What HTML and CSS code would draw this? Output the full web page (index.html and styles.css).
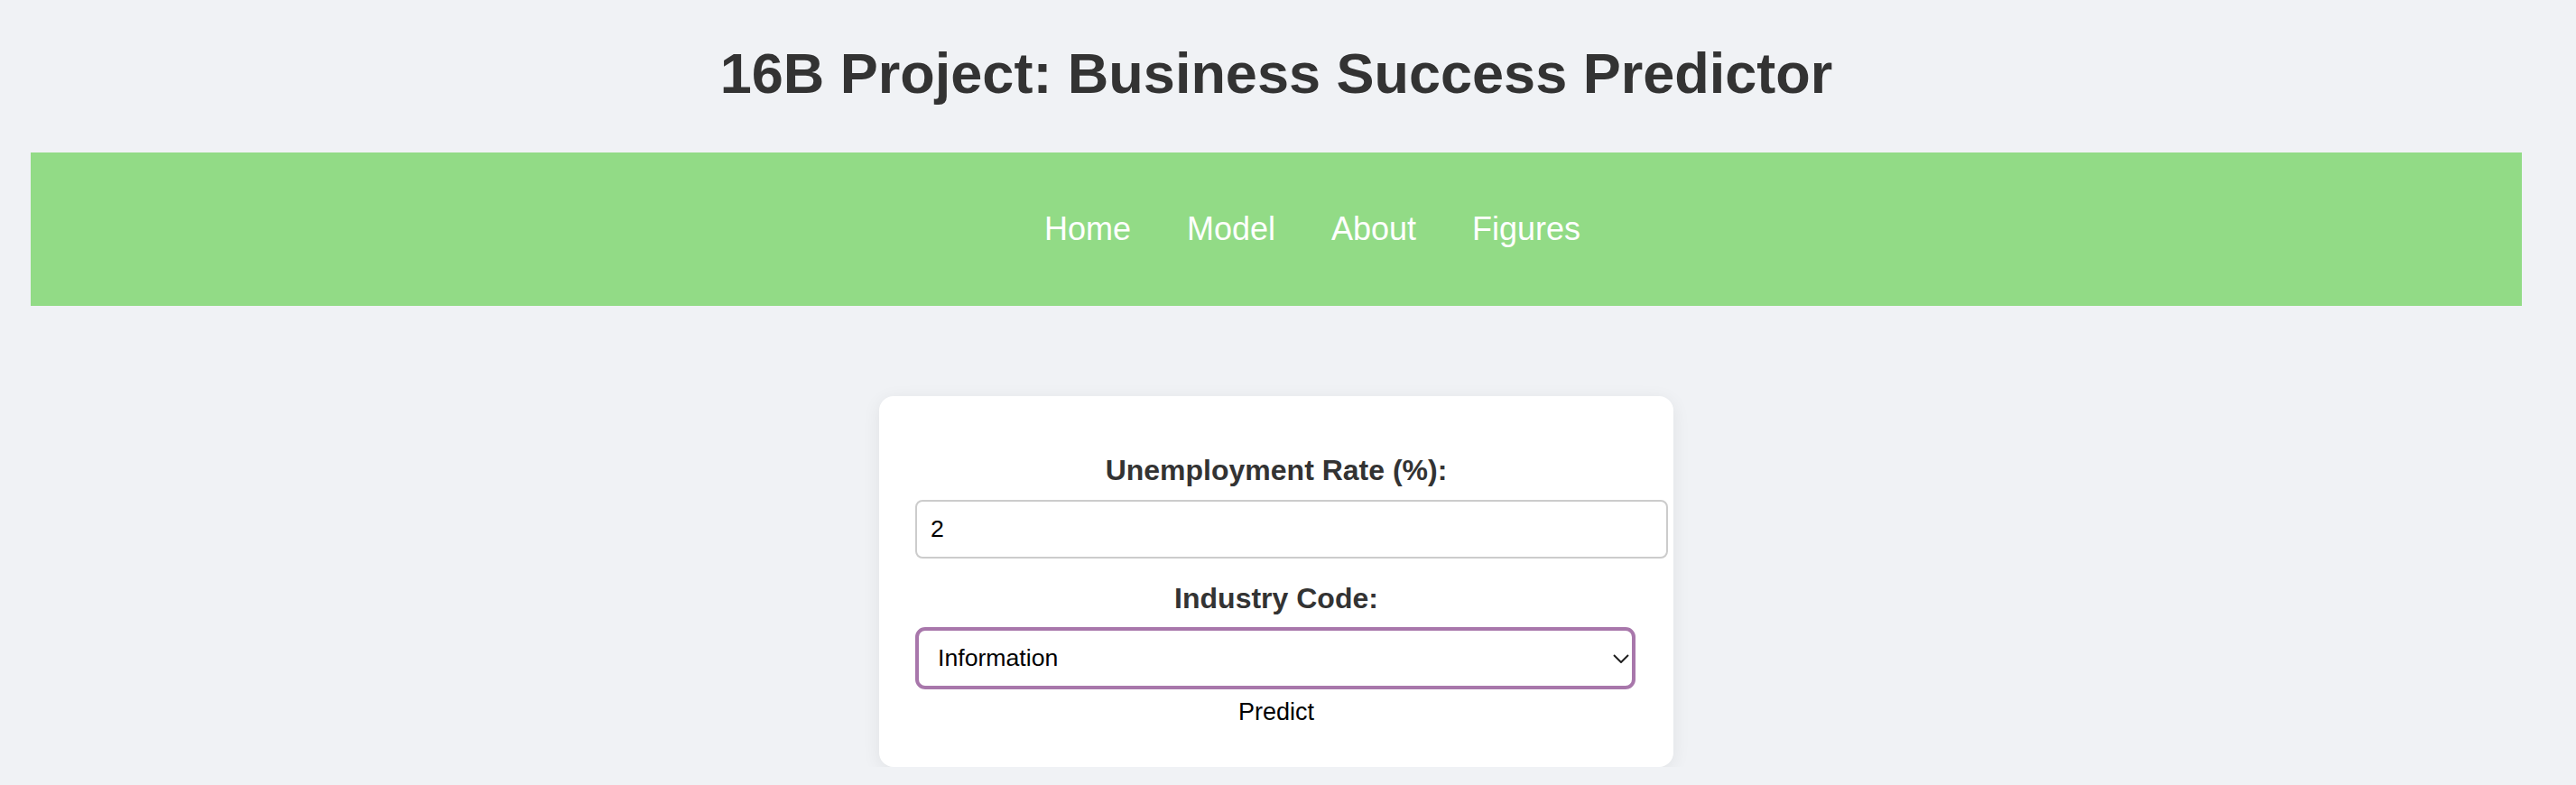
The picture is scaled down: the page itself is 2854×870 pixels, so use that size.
FILE: index.html
```html
<!DOCTYPE html>
<html lang="en">
<head>
<meta charset="utf-8">
<title>16B Project: Business Success Predictor</title>
<link rel="stylesheet" href="styles.css">
</head>
<body>
<div class="page">
  <h1 class="title">16B Project: Business Success Predictor</h1>
  <nav class="nav">
    <ul class="nav-list">
      <li><a class="nav-link" href="#">Home</a></li>
      <li><a class="nav-link" href="#">Model</a></li>
      <li><a class="nav-link" href="#">About</a></li>
      <li><a class="nav-link" href="#">Figures</a></li>
    </ul>
  </nav>
  <div class="card">
    <form class="form">
      <label class="label" for="rate">Unemployment Rate (%):</label>
      <input class="text-input" id="rate" type="text" value="2">
      <label class="label label-second" for="industry">Industry Code:</label>
      <div class="select-wrap">
        <select class="select" id="industry">
          <option>Information</option>
        </select>
        <svg class="chevron" width="18" height="10" viewBox="0 0 18 10" aria-hidden="true"><path d="M1 1 L9 9 L17 1" fill="none" stroke="#1f1f1f" stroke-width="2"/></svg>
      </div>
      <button class="predict" type="button">Predict</button>
    </form>
  </div>
</div>
</body>
</html>
```
FILE: styles.css
```css
html, body {
  margin: 0;
  padding: 0;
  background: #f0f2f5;
}
.page {
  width: 2828px;
  padding-top: 44px;
  font-family: "Liberation Sans", Arial, sans-serif;
}
.title {
  margin: 0;
  text-align: center;
  font-size: 63px;
  line-height: 74px;
  font-weight: 700;
  color: #333333;
}
.nav {
  margin: 51px 34px 0 34px;
  background: #92db86;
  padding: 64px 0;
}
.nav-list {
  list-style: none;
  margin: 0;
  padding: 0 0 0 80px;
  display: flex;
  justify-content: center;
}
.nav-list li {
  margin: 0 31px;
}
.nav-link {
  color: #ffffff;
  text-decoration: none;
  font-size: 36px;
  line-height: 42px;
  display: block;
}
.card {
  width: 800px;
  margin: 100px auto 0 auto;
  background: #ffffff;
  border-radius: 16px;
  padding: 64px 40px 43px 40px;
  box-shadow: 0 4px 20px rgba(0, 0, 0, 0.07);
}
.form {
  display: flex;
  flex-direction: column;
  align-items: flex-start;
}
.label {
  align-self: stretch;
  text-align: center;
  font-size: 32px;
  line-height: 37px;
  font-weight: 700;
  color: #333333;
  margin-bottom: 14px;
}
.label-second {
  margin-bottom: 13px;
}
.text-input {
  width: 800px;
  font-family: "Liberation Sans", Arial, sans-serif;
  font-size: 26.67px;
  line-height: 31px;
  padding: 15px;
  border: 2px solid #cccccc;
  border-radius: 8px;
  color: #000000;
  margin: 0 0 26px 0;
  outline: none;
}
.select-wrap {
  position: relative;
  width: 800px;
  align-self: flex-start;
}
.select {
  -webkit-appearance: none;
  appearance: none;
  box-sizing: border-box;
  width: 798px;
  height: 69px;
  font-family: "Liberation Sans", Arial, sans-serif;
  font-size: 26.67px;
  line-height: 31px;
  padding: 0 40px 0 21px;
  border: 4px solid #a877ab;
  border-radius: 11px;
  background: #ffffff;
  color: #000000;
  margin: 0;
  outline: none;
}
.chevron {
  position: absolute;
  left: 773px;
  top: 30px;
  pointer-events: none;
}
.predict {
  align-self: center;
  margin-top: 8px;
  background: none;
  border: none;
  font-family: "Liberation Sans", Arial, sans-serif;
  font-size: 27px;
  line-height: 31px;
  padding: 2px 12px;
  color: #000000;
}
```
